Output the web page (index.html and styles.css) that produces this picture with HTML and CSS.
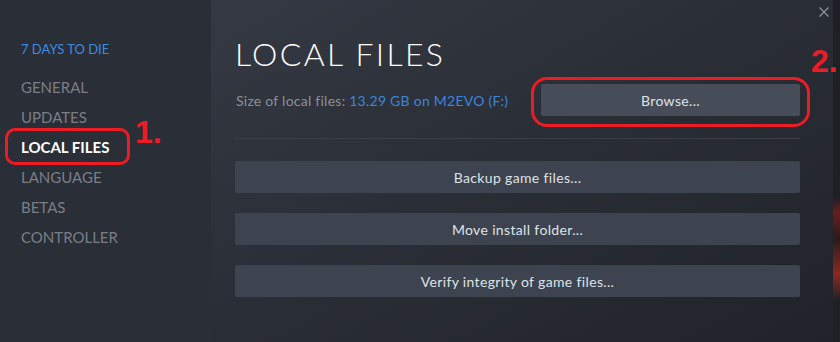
FILE: index.html
```html
<!DOCTYPE html>
<html lang="en">
<head>
    <meta charset="UTF-8">
    <title>7 Days to Die - Properties</title>
    <link rel="stylesheet" href="styles.css">
</head>
<body>
    <div class="dialog">
        <div class="sidebar">
            <div class="game-title">7 DAYS TO DIE</div>
            <div class="nav-item">GENERAL</div>
            <div class="nav-item">UPDATES</div>
            <div class="nav-item active">LOCAL FILES</div>
            <div class="nav-item">LANGUAGE</div>
            <div class="nav-item">BETAS</div>
            <div class="nav-item">CONTROLLER</div>
        </div>

        <div class="main">
            <h1 class="page-title">LOCAL FILES</h1>
            <div class="size-row">
                <div class="size-label">Size of local files: <span class="size-value">13.29 GB on M2EVO (F:)</span></div>
                <button class="btn btn-browse">Browse...</button>
            </div>
            <div class="separator"></div>
            <div class="actions">
                <button class="btn">Backup game files...</button>
                <button class="btn">Move install folder...</button>
                <button class="btn">Verify integrity of game files...</button>
            </div>
        </div>

        <div class="edge"></div>

        <svg class="close" width="10" height="10" viewBox="0 0 10 10">
            <path d="M0.5 0.5 L9.5 9.5 M9.5 0.5 L0.5 9.5" stroke="#8c9199" stroke-width="1.3" fill="none"/>
        </svg>

        <!-- annotations -->
        <div class="mark mark-nav"></div>
        <div class="mark-num num-1">1.</div>
        <div class="mark mark-browse"></div>
        <div class="mark-num num-2">2.</div>
    </div>
</body>
</html>
```

FILE: styles.css
```css
body {
    margin: 0;
    background: #1f2127;
    font-family: Lato, 'Liberation Sans', sans-serif;
}

.dialog {
    position: relative;
    display: flex;
    width: 840px;
    height: 342px;
    overflow: hidden;
}

.sidebar {
    width: 190px;
    padding: 34px 0 0 21px;
    background: #2a2e37;
}

.game-title {
    font-size: 13px;
    line-height: 30px;
    color: #3d8ae0;
    margin-bottom: 8px;
}

.nav-item {
    font-size: 15px;
    line-height: 30px;
    color: #7a7e86;
}

.nav-item.active {
    color: #ffffff;
    font-weight: 700;
}

.main {
    flex: 1;
    padding: 0 33px 0 24px;
    background: linear-gradient(150deg, #353943 0%, #2a2e36 45%, #202329 100%);
}

.page-title {
    margin: 34px 0 0 0;
    font-size: 32px;
    line-height: 40px;
    font-weight: 300;
    letter-spacing: 2.3px;
    color: #ffffff;
}

.size-row {
    display: flex;
    align-items: center;
    justify-content: space-between;
    margin-top: 10px;
}

.size-label {
    font-size: 14px;
    letter-spacing: 0.25px;
    color: #8b9098;
    padding-left: 1px;
}

.size-value {
    color: #3b86dc;
}

.btn {
    display: block;
    width: 100%;
    height: 32px;
    border: none;
    border-radius: 2px;
    background: #3d4450;
    color: #dfe3e6;
    font-family: Lato, 'Liberation Sans', sans-serif;
    font-size: 14px;
    letter-spacing: 0.35px;
    cursor: pointer;
}

.btn-browse {
    width: 259px;
    background: #474d58;
}

.separator {
    height: 1px;
    margin-top: 22px;
    background: #3a3e46;
}

.actions {
    display: flex;
    flex-direction: column;
    gap: 20px;
    margin-top: 22px;
}

.edge {
    width: 7px;
    background: linear-gradient(180deg, #1e2026 0%, #1e2026 58%, #6b1d1d 62%, #2a1c1c 70%, #8a2a22 80%, #1e2026 88%);
}

.close {
    position: absolute;
    top: 7px;
    left: 819px;
}

.mark {
    position: absolute;
    border: 3px solid #ed1c24;
}

.mark-nav {
    left: 5px;
    top: 128px;
    width: 119px;
    height: 31px;
    border-radius: 10px;
}

.mark-browse {
    left: 531px;
    top: 77px;
    width: 273px;
    height: 44px;
    border-radius: 16px;
}

.mark-num {
    position: absolute;
    font-family: 'Liberation Sans', sans-serif;
    font-size: 32px;
    font-weight: 700;
    color: #ed1c24;
    line-height: 1;
}

.num-1 {
    left: 135px;
    top: 116px;
}

.num-2 {
    left: 811px;
    top: 45px;
}
```
